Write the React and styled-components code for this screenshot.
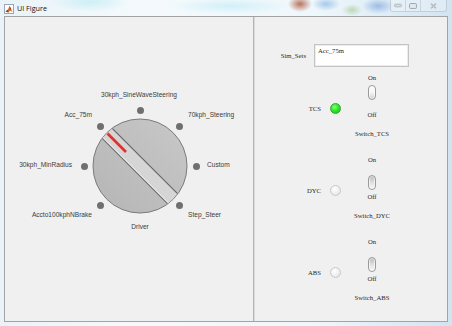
import React from 'react';
import styled, { createGlobalStyle } from 'styled-components';

const GlobalStyle = createGlobalStyle`
  html, body {
    margin: 0;
    padding: 0;
    width: 452px;
    height: 326px;
    overflow: hidden;
    background: #dfeaf3;
  }
`;

// Knob positions (widget coordinates)
const CENTER = { x: 130, y: 81 };
const DOT_RADIUS = 56;
const dotAngles = [90, 45, 0, -45, -135, 180, 135];

const knobLabels = [
  { text: '30kph_SineWaveSteering', x: 129, y: 10, anchor: 'middle' },
  { text: '70kph_Steering', x: 178, y: 30, anchor: 'start' },
  { text: 'Custom', x: 197, y: 80, anchor: 'start' },
  { text: 'Step_Steer', x: 178, y: 130, anchor: 'start' },
  { text: 'Accto100kphNBrake', x: 82, y: 130, anchor: 'end' },
  { text: '30kph_MinRadius', x: 62, y: 80, anchor: 'end' },
  { text: 'Acc_75m', x: 82, y: 30, anchor: 'end' },
  { text: 'Driver', x: 130, y: 142, anchor: 'middle' },
];

const shift = { start: '0', middle: '-50%', end: '-100%' };

const switches = [
  { name: 'TCS', on: true },
  { name: 'DYC', on: false },
  { name: 'ABS', on: false },
];

const App = () => {
  return (
    <>
      <GlobalStyle />
      <Window>
        <TitleBar>
          <AppIcon viewBox="0 0 10 10">
            <rect x="0.5" y="0.5" width="9" height="9" fill="#fff" stroke="#9aa6b2" />
            <path d="M1.5 7.5 L4 5.5 L5.5 2 L7 4.5 L8.5 8 L6 6.5 L4.5 8.5 Z" fill="#e06a1c" />
            <path d="M1.5 7.5 L4 5.5 L4.5 8.5 Z" fill="#2a5aa8" />
            <path d="M5.5 2 L7 4.5 L6 6.5 Z" fill="#b8301a" />
          </AppIcon>
          <Title>UI Figure</Title>
          <WinButtons>
            <WinButton $w={15}>
              <svg width="8" height="5" viewBox="0 0 8 5">
                <rect x="0.5" y="1.2" width="7" height="2.6" rx="1.2" fill="#d9dee2" stroke="#9aa3ab" strokeWidth="0.7" />
              </svg>
            </WinButton>
            <WinButton $w={15}>
              <svg width="8" height="6" viewBox="0 0 8 6">
                <rect x="0.6" y="0.6" width="6.8" height="4.8" rx="0.8" fill="none" stroke="#9aa3ab" strokeWidth="1" />
                <rect x="2" y="2" width="4" height="2" fill="#e3e8ec" />
              </svg>
            </WinButton>
            <WinButton $w={25} $last>
              <svg width="7" height="6" viewBox="0 0 7 6">
                <path d="M1 0.8 L6 5.2 M6 0.8 L1 5.2" stroke="#9aa3ab" strokeWidth="1.5" />
                <path d="M1 0.8 L6 5.2 M6 0.8 L1 5.2" stroke="#eef1f3" strokeWidth="0.5" />
              </svg>
            </WinButton>
          </WinButtons>
        </TitleBar>

        <Client>
          <LeftPanel>
            <KnobWidget>
              {dotAngles.map((a) => {
                const r = (a * Math.PI) / 180;
                const x = CENTER.x + DOT_RADIUS * Math.cos(r);
                const y = CENTER.y - DOT_RADIUS * Math.sin(r);
                return <Dot key={a} style={{ left: x - 3.5, top: y - 3.5 }} />;
              })}
              {knobLabels.map((l) => (
                <KnobLabel
                  key={l.text}
                  style={{ left: l.x, top: l.y - 4, transform: `translateX(${shift[l.anchor]})` }}
                >
                  {l.text}
                </KnobLabel>
              ))}
              <KnobDial width="100" height="100" viewBox="0 0 100 100">
                <defs>
                  <clipPath id="knobClip">
                    <circle cx="50" cy="50" r="46.5" />
                  </clipPath>
                  <linearGradient id="knobBody" x1="1" y1="0" x2="0" y2="1">
                    <stop offset="0" stopColor="#c8c8c8" />
                    <stop offset="1" stopColor="#b5b5b5" />
                  </linearGradient>
                </defs>
                <circle cx="50" cy="50" r="47" fill="url(#knobBody)" stroke="#7b7b7b" strokeWidth="1" />
                <g clipPath="url(#knobClip)">
                  <g transform="rotate(45 50 50)">
                    <rect x="-2" y="43" width="104" height="14" fill="#d5d5d5" />
                    <line x1="-2" y1="43" x2="102" y2="43" stroke="#5f5f5f" strokeWidth="1" />
                    <line x1="-2" y1="56" x2="102" y2="56" stroke="#f4f4f4" strokeWidth="0.9" />
                    <line x1="-2" y1="57.2" x2="102" y2="57.2" stroke="#6b6b6b" strokeWidth="1" />
                  </g>
                </g>
                <line x1="17.5" y1="17.5" x2="36" y2="36" stroke="#e3302d" strokeWidth="2.6" />
              </KnobDial>
            </KnobWidget>
          </LeftPanel>

          <RightPanel>
            <SimRow>
              <SimLabel>Sim_Sets</SimLabel>
              <SimBox>Acc_75m</SimBox>
            </SimRow>
            {switches.map((s) => (
              <SwitchGroup key={s.name}>
                <LampSide>
                  <LampLabel>{s.name}</LampLabel>
                  <Lamp $on={s.on} />
                </LampSide>
                <SwitchColumn>
                  <SmallText>On</SmallText>
                  <Slot>
                    <Capsule $on={s.on} />
                  </Slot>
                  <SmallText $gap={3}>Off</SmallText>
                  <SmallText $gap={11}>Switch_{s.name}</SmallText>
                </SwitchColumn>
              </SwitchGroup>
            ))}
          </RightPanel>
        </Client>
      </Window>
    </>
  );
};

const Window = styled.div`
  width: 452px;
  height: 326px;
  box-sizing: border-box;
  display: flex;
  flex-direction: column;
  background:
    radial-gradient(ellipse 12px 8px at 300px 4px, rgba(176, 92, 66, 0.85), rgba(176, 92, 66, 0) 100%),
    radial-gradient(ellipse 14px 7px at 326px 4px, rgba(120, 170, 225, 0.6), rgba(120, 170, 225, 0) 100%),
    radial-gradient(ellipse 10px 6px at 352px 10px, rgba(150, 190, 120, 0.5), rgba(150, 190, 120, 0) 100%),
    radial-gradient(ellipse 16px 8px at 378px 6px, rgba(90, 140, 210, 0.5), rgba(90, 140, 210, 0) 100%),
    radial-gradient(ellipse 40px 10px at 90px 2px, rgba(190, 235, 245, 0.7), rgba(190, 235, 245, 0) 100%),
    radial-gradient(ellipse 60px 8px at 230px 6px, rgba(200, 238, 248, 0.8), rgba(200, 238, 248, 0) 100%),
    linear-gradient(to right, #e9f3f8 0%, #f4fafc 30%, #eef7fb 70%, #d2e3f1 100%);
`;

const TitleBar = styled.div`
  height: 16px;
  flex: 0 0 16px;
  display: flex;
  align-items: flex-start;
  padding-left: 4px;
`;

const AppIcon = styled.svg`
  width: 10px;
  height: 10px;
  margin-top: 4px;
`;

const Title = styled.span`
  margin-left: 3px;
  margin-top: 4px;
  font-family: 'Open Sans', 'Liberation Sans', sans-serif;
  font-size: 7.2px;
  line-height: 9px;
  color: #111;
`;

const WinButtons = styled.div`
  margin-left: auto;
  margin-right: 5px;
  height: 11px;
  display: flex;
  border: 1px solid rgba(120, 140, 160, 0.3);
  border-top: none;
  border-radius: 0 0 3px 3px;
  background: rgba(255, 255, 255, 0.25);
`;

const WinButton = styled.div`
  width: ${(p) => p.$w}px;
  height: 100%;
  display: flex;
  align-items: center;
  justify-content: center;
  border-right: ${(p) => (p.$last ? 'none' : '1px solid rgba(120, 140, 160, 0.25)')};
  box-sizing: border-box;
`;

const Client = styled.div`
  flex: 1;
  margin: 0 4px 4px 4px;
  border: 1px solid #a3a3a3;
  background: #f0f0f0;
  display: flex;
`;

const LeftPanel = styled.div`
  width: 249px;
  border-right: 1px solid #b4b4b4;
  padding: 68px 0 0 5px;
  box-sizing: border-box;
`;

const KnobWidget = styled.div`
  position: relative;
  width: 240px;
  height: 160px;
`;

const Dot = styled.div`
  position: absolute;
  width: 7px;
  height: 7px;
  border-radius: 50%;
  background: #6f6f6f;
`;

const KnobLabel = styled.div`
  position: absolute;
  white-space: nowrap;
  font-family: 'Liberation Sans', Arial, sans-serif;
  font-size: 6.6px;
  line-height: 8px;
  color: #3c3c3c;
`;

const KnobDial = styled.svg`
  position: absolute;
  left: ${CENTER.x - 50}px;
  top: ${CENTER.y - 50}px;
`;

const RightPanel = styled.div`
  flex: 1;
  border-left: 1px solid #dadada;
  padding-top: 27px;
  display: flex;
  flex-direction: column;
  font-family: 'Liberation Serif', 'Times New Roman', serif;
  font-size: 6.7px;
  color: #2a2a2a;
`;

const SimRow = styled.div`
  display: flex;
  align-items: center;
  height: 23px;
  margin-bottom: 7px;
`;

const SimLabel = styled.div`
  width: 51px;
  text-align: right;
  margin-right: 8px;
`;

const SimBox = styled.div`
  width: 95px;
  height: 23px;
  box-sizing: border-box;
  background: #fff;
  border: 1px solid #c4c4c4;
  box-shadow: inset 0 0 0 1px #ececec;
  padding: 2px 3px;
  line-height: 8px;
`;

const SwitchGroup = styled.div`
  height: 82px;
  display: flex;
`;

const LampSide = styled.div`
  width: 87px;
  height: 11px;
  margin-top: 29px;
  display: flex;
  align-items: center;
`;

const LampLabel = styled.div`
  width: 66px;
  text-align: right;
  margin-right: 9px;
  line-height: 8px;
`;

const Lamp = styled.div`
  width: 11px;
  height: 11px;
  box-sizing: border-box;
  border-radius: 50%;
  border: 1px solid ${(p) => (p.$on ? '#2fa82f' : '#c9c9c9')};
  background: ${(p) =>
    p.$on
      ? 'radial-gradient(circle at 40% 35%, #8dff7a 0%, #2ee82a 45%, #16b816 100%)'
      : 'radial-gradient(circle at 40% 35%, #ffffff 0%, #f0f0f0 50%, #dcdcdc 100%)'};
`;

const SwitchColumn = styled.div`
  width: 60px;
  display: flex;
  flex-direction: column;
  align-items: center;
`;

const SmallText = styled.div`
  line-height: 8px;
  margin-top: ${(p) => p.$gap || 0}px;
  white-space: nowrap;
`;

const Slot = styled.div`
  width: 8px;
  height: 23px;
  margin-top: 3px;
`;

const Capsule = styled.div`
  width: 8px;
  height: 15px;
  box-sizing: border-box;
  margin-top: ${(p) => (p.$on ? 0 : 8)}px;
  border-radius: 4px;
  border: 1px solid #9a9a9a;
  background: ${(p) =>
    p.$on
      ? 'linear-gradient(to bottom, #fdfdfd 0%, #f4f4f4 50%, #d0d0d0 100%)'
      : 'linear-gradient(to bottom, #b8b8b8 0%, #dcdcdc 45%, #fafafa 100%)'};
  box-shadow: inset 0 0 0 1px rgba(255, 255, 255, 0.6);
`;

export default App;
